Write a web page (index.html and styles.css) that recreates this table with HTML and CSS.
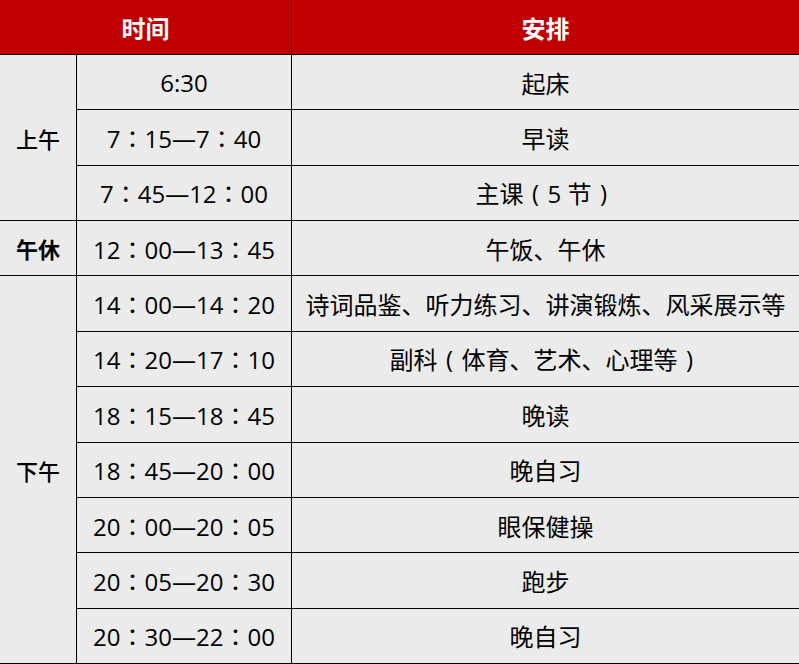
FILE: index.html
```html
<!DOCTYPE html>
<html lang="zh-CN">
<head>
<meta charset="utf-8">
<title>作息时间表</title>
<link rel="stylesheet" href="styles.css">
</head>
<body>
<div class="schedule">
  <div class="head head-time">时间</div>
  <div class="head head-plan">安排</div>

  <div class="period period-am">上午</div>
  <div class="cell time">6:30</div>
  <div class="cell plan">起床</div>
  <div class="cell time">7：15—7：40</div>
  <div class="cell plan">早读</div>
  <div class="cell time">7：45—12：00</div>
  <div class="cell plan">主课<span class="paren">(</span>5 节<span class="paren">)</span></div>

  <div class="period period-noon">午休</div>
  <div class="cell time">12：00—13：45</div>
  <div class="cell plan">午饭、午休</div>

  <div class="period period-pm">下午</div>
  <div class="cell time">14：00—14：20</div>
  <div class="cell plan">诗词品鉴、听力练习、讲演锻炼、风采展示等</div>
  <div class="cell time">14：20—17：10</div>
  <div class="cell plan">副科<span class="paren">(</span>体育、艺术、心理等<span class="paren">)</span></div>
  <div class="cell time">18：15—18：45</div>
  <div class="cell plan">晚读</div>
  <div class="cell time">18：45—20：00</div>
  <div class="cell plan">晚自习</div>
  <div class="cell time">20：00—20：05</div>
  <div class="cell plan">眼保健操</div>
  <div class="cell time">20：05—20：30</div>
  <div class="cell plan">跑步</div>
  <div class="cell time">20：30—22：00</div>
  <div class="cell plan">晚自习</div>
</div>
</body>
</html>
```

FILE: styles.css
```css
html, body {
  margin: 0;
  padding: 0;
  background: #ebebeb;
}

.schedule {
  width: 799px;
  height: 663px;
  padding-bottom: 1px;
  background: #000;
  display: grid;
  grid-template-columns: 76px 214px 1fr;
  grid-template-rows: 54px repeat(11, 1fr);
  gap: 1px;
  font-family: "Open Sans", "Noto Sans CJK SC", sans-serif;
  font-size: 24px;
  color: #000;
}

.head,
.cell,
.period {
  display: flex;
  align-items: center;
  justify-content: center;
  white-space: nowrap;
}

.head {
  background: #c00000;
  color: #fff;
  font-weight: 700;
  font-family: "Noto Sans CJK SC", sans-serif;
}

.head-time {
  grid-column: 1 / 3;
}

.cell,
.period {
  background: #ebebeb;
}

.time {
  font-family: "Open Sans", "Noto Sans CJK TC", sans-serif;
}

.plan {
  font-family: "Open Sans", "Noto Sans CJK SC", sans-serif;
}

.paren {
  display: inline-block;
  width: 1em;
  text-align: center;
  font-family: "Open Sans", sans-serif;
}

.period {
  grid-column: 1;
  font-size: 22px;
  font-family: "Noto Sans CJK SC", sans-serif;
  font-weight: 500;
}

.period-am {
  grid-row: 2 / 5;
}

.period-noon {
  grid-row: 5 / 6;
  font-weight: 700;
}

.period-pm {
  grid-row: 6 / 13;
}
```
